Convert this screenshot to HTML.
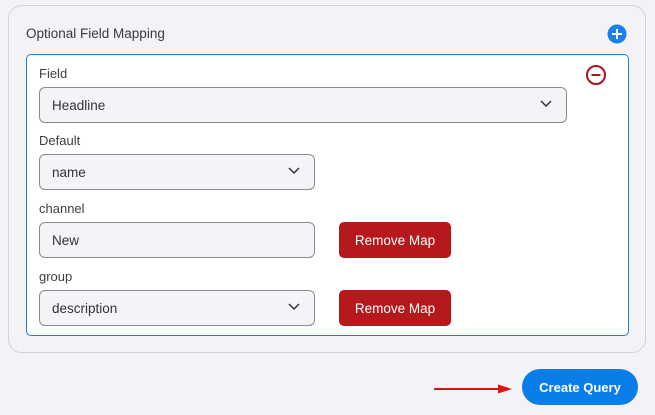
<!DOCTYPE html>
<html><head><style>
body{margin:0;width:655px;height:415px;background:#f3f2f7;font-family:"Liberation Sans",sans-serif;position:relative;overflow:hidden;color:#3a3a3a}
.a{position:absolute;box-sizing:border-box}
.card{left:8px;top:5px;width:638px;height:348px;border:1px solid #d3d2d8;border-radius:14px;background:#f3f2f7}
.inner{left:26px;top:54px;width:603px;height:282px;border:1px solid #1a7fd6;border-radius:5px;background:#fff}
.lbl{font-size:13px;color:#3f3f3f}
.inp{border:1px solid #8a8a8a;border-radius:6px;background:#f4f3f8;font-size:13.5px;color:#333;padding-left:12px;line-height:35px}
.chev{position:absolute;right:14px;top:12px}
.btn{background:#b5191b;color:#fff;border-radius:5px;font-size:13.5px;text-align:center;line-height:37px}
</style></head><body>
<div class="a card"></div>
<div class="a" style="left:26px;top:26px;font-size:13.5px;color:#3a3a3a">Optional Field Mapping</div>
<svg class="a" style="left:607px;top:24px" width="20" height="20"><circle cx="10" cy="10" r="9.5" fill="#1a7ff0"/><path d="M10 5v10M5 10h10" stroke="#fff" stroke-width="2"/></svg>
<div class="a inner"></div>
<svg class="a" style="left:585px;top:64px" width="22" height="22"><circle cx="11" cy="11" r="9" fill="none" stroke="#a31a1d" stroke-width="2"/><path d="M6.5 11h9" stroke="#a31a1d" stroke-width="2"/></svg>
<div class="a lbl" style="left:39px;top:66px">Field</div>
<div class="a inp" style="left:39px;top:87px;width:528px;height:36px">Headline<svg class="chev" width="12" height="8"><path d="M1 1l5 5 5-5" fill="none" stroke="#333" stroke-width="1.5"/></svg></div>
<div class="a lbl" style="left:39px;top:133px">Default</div>
<div class="a inp" style="left:39px;top:154px;width:276px;height:36px">name<svg class="chev" width="12" height="8"><path d="M1 1l5 5 5-5" fill="none" stroke="#333" stroke-width="1.5"/></svg></div>
<div class="a lbl" style="left:39px;top:201px">channel</div>
<div class="a inp" style="left:39px;top:222px;width:276px;height:36px">New</div>
<div class="a btn" style="left:339px;top:222px;width:112px;height:36px">Remove Map</div>
<div class="a lbl" style="left:39px;top:269px">group</div>
<div class="a inp" style="left:39px;top:290px;width:276px;height:36px">description<svg class="chev" width="12" height="8"><path d="M1 1l5 5 5-5" fill="none" stroke="#333" stroke-width="1.5"/></svg></div>
<div class="a btn" style="left:339px;top:290px;width:112px;height:36px">Remove Map</div>
<svg class="a" style="left:432px;top:383px" width="84" height="12"><path d="M2 6h66" stroke="#e01010" stroke-width="2"/><path d="M66 1.5l14 4.5-14 4.5z" fill="#e01010"/></svg>
<div class="a" style="left:522px;top:369px;width:116px;height:36px;border-radius:18px;background:#0a7ee8;color:#fff;font-weight:bold;font-size:13px;text-align:center;line-height:37px">Create Query</div>
</body></html>
